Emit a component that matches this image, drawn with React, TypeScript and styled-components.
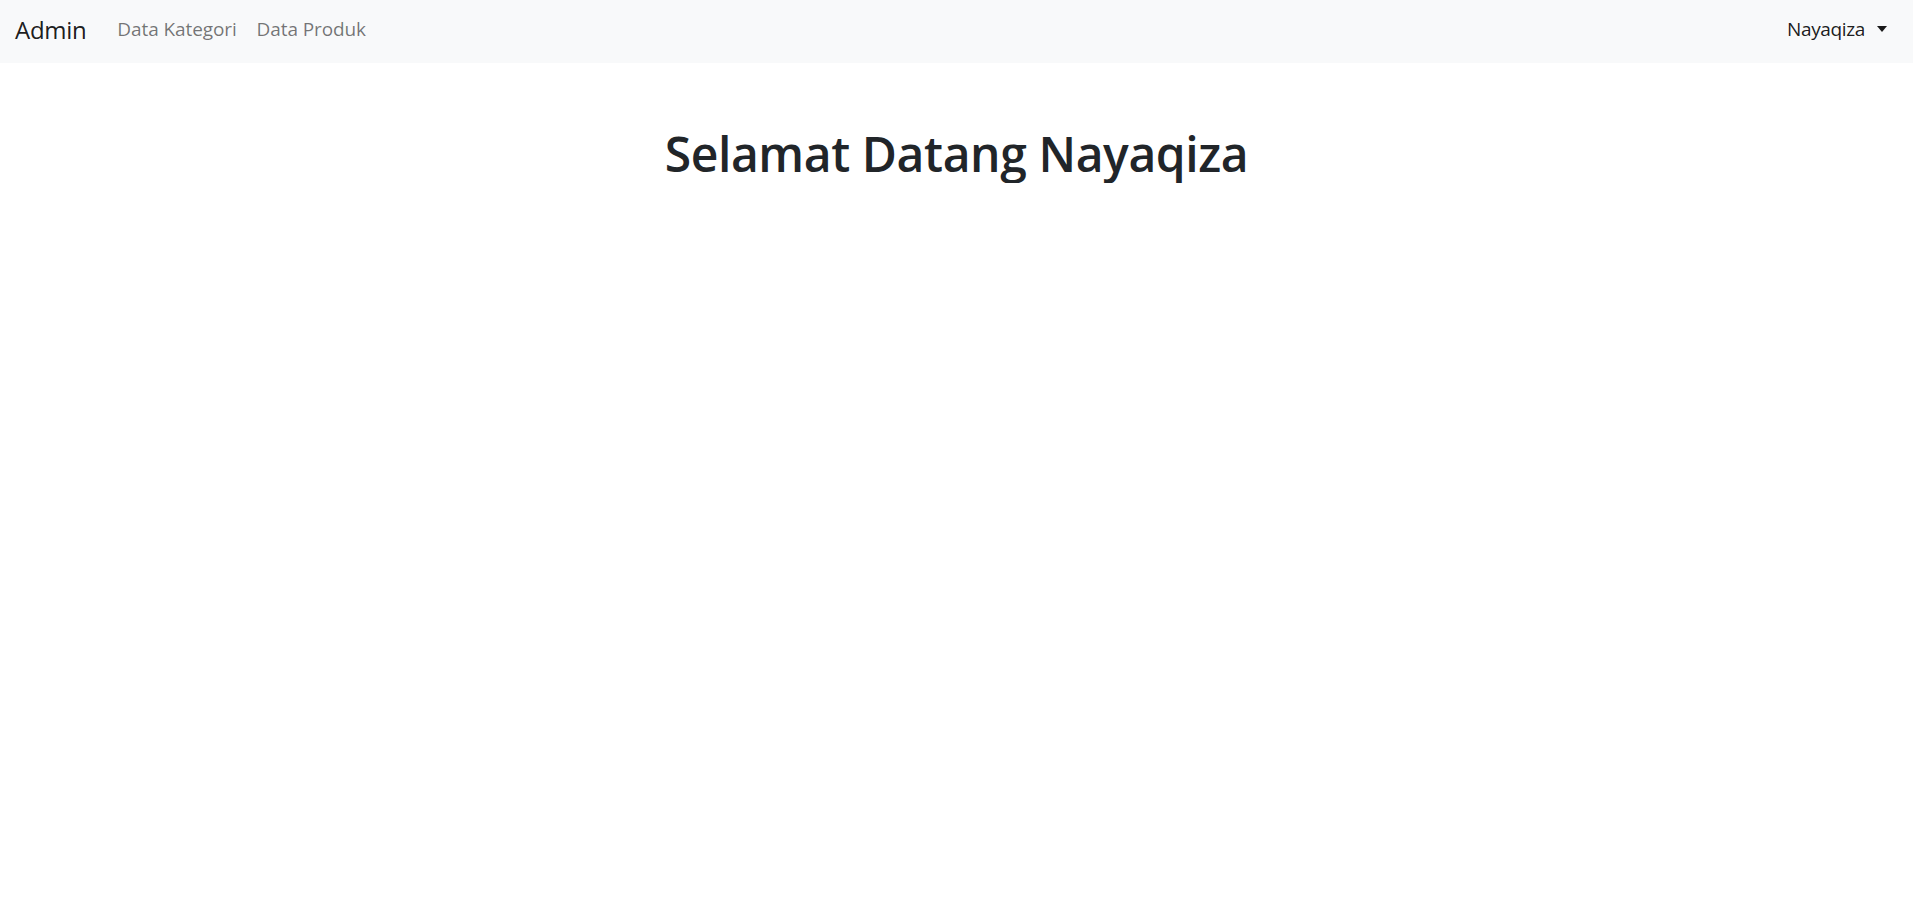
import React from 'react';
import styled, {createGlobalStyle} from 'styled-components';

const GlobalStyle = createGlobalStyle`
    body {
        margin: 0;
        background: #ffffff;
        font-family: "Open Sans", "Noto Sans", sans-serif;
        color: #212529;
    }
`;

const Navbar = styled.nav`
    height: 63px;
    background: #f8f9fa;
    display: flex;
    align-items: center;
    padding: 0 26px 5px 15px;
    box-sizing: border-box;
`;

const Brand = styled.a`
    font-size: 24px;
    color: rgba(0, 0, 0, 0.9);
    text-decoration: none;
    margin-right: 21px;
    letter-spacing: -0.3px;
`;

const NavList = styled.div`
    display: flex;
    align-items: center;
    flex: 1;
`;

const NavLink = styled.a<{active?: boolean}>`
    font-size: 19px;
    padding: 0 10px;
    color: ${({active}) => (active ? 'rgba(0, 0, 0, 0.9)' : 'rgba(0, 0, 0, 0.55)')};
    text-decoration: none;
    letter-spacing: -0.1px;
`;

const UserToggle = styled.a`
    display: flex;
    align-items: center;
    font-size: 19px;
    color: rgba(0, 0, 0, 0.9);
    letter-spacing: -0.35px;
    text-decoration: none;
`;

const Caret = styled.span`
    display: inline-block;
    margin-left: 12px;
    border-top: 6px solid currentColor;
    border-left: 5px solid transparent;
    border-right: 5px solid transparent;
`;

const Main = styled.main`
    display: flex;
    justify-content: center;
    padding-top: 62px;
`;

const Title = styled.h1`
    margin: 0;
    font-size: 48px;
    font-weight: 600;
    line-height: 1.2;
    letter-spacing: -0.4px;
    color: #212529;
`;

export default function App() {
    return (
        <>
            <GlobalStyle/>
            <Navbar>
                <Brand href='#'>Admin</Brand>
                <NavList>
                    <NavLink href='#'>Data Kategori</NavLink>
                    <NavLink href='#'>Data Produk</NavLink>
                </NavList>
                <UserToggle href='#'>
                    Nayaqiza
                    <Caret/>
                </UserToggle>
            </Navbar>
            <Main>
                <Title>Selamat Datang Nayaqiza</Title>
            </Main>
        </>
    );
}
